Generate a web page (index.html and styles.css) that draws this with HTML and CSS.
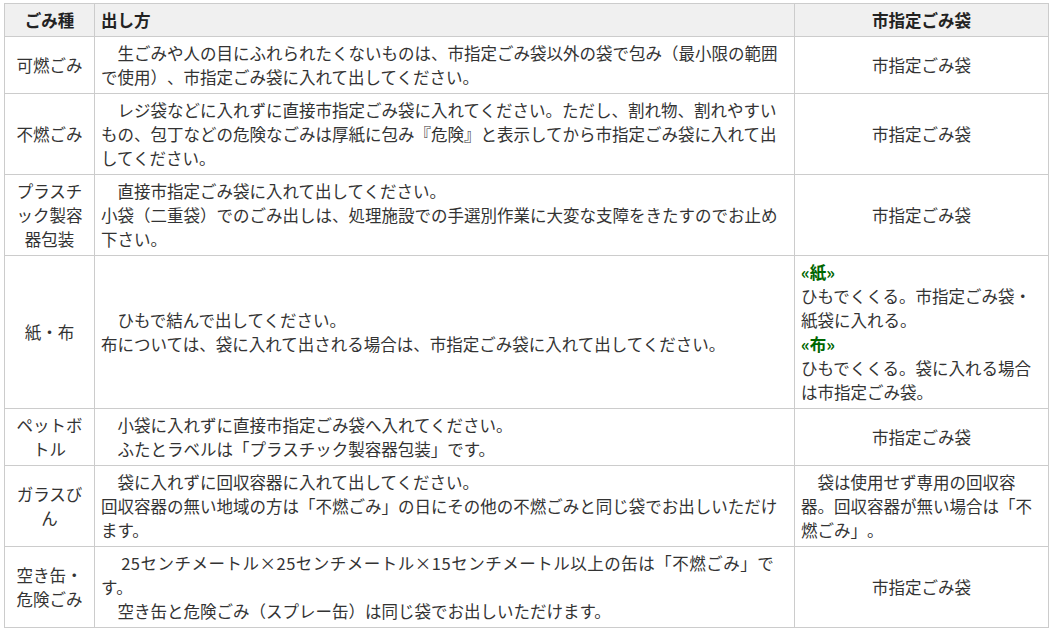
FILE: index.html
```html
<!DOCTYPE html>
<html lang="ja">
<head>
<meta charset="utf-8">
<title>ごみの出し方</title>
<link rel="stylesheet" href="styles.css">
</head>
<body>
<table class="gomi">
  <colgroup>
    <col class="c1">
    <col class="c2">
    <col class="c3">
  </colgroup>
  <thead>
    <tr>
      <th class="center">ごみ種</th>
      <th class="left">出し方</th>
      <th class="center">市指定ごみ袋</th>
    </tr>
  </thead>
  <tbody>
    <tr>
      <td class="center">可燃ごみ</td>
      <td>　生ごみや人の目にふれられたくないものは、市指定ごみ袋以外の袋で包み（最小限の範囲で使用）、市指定ごみ袋に入れて出してください。</td>
      <td class="center">市指定ごみ袋</td>
    </tr>
    <tr>
      <td class="center">不燃ごみ</td>
      <td>　レジ袋などに入れずに直接市指定ごみ袋に入れてください。ただし、割れ物、割れやすいもの、包丁などの危険なごみは厚紙に包み『危険』と表示してから市指定ごみ袋に入れて出してください。</td>
      <td class="center">市指定ごみ袋</td>
    </tr>
    <tr>
      <td class="center">プラスチック製容器包装</td>
      <td>　直接市指定ごみ袋に入れて出してください。<br>小袋（二重袋）でのごみ出しは、処理施設での手選別作業に大変な支障をきたすのでお止め下さい。</td>
      <td class="center">市指定ごみ袋</td>
    </tr>
    <tr>
      <td class="center">紙・布</td>
      <td>　ひもで結んで出してください。<br>布については、袋に入れて出される場合は、市指定ごみ袋に入れて出してください。</td>
      <td><strong class="green">«紙»</strong><br>ひもでくくる。市指定ごみ袋・紙袋に入れる。<br><strong class="green">«布»</strong><br>ひもでくくる。袋に入れる場合は市指定ごみ袋。</td>
    </tr>
    <tr>
      <td class="center">ペットボトル</td>
      <td>　小袋に入れずに直接市指定ごみ袋へ入れてください。<br>　ふたとラベルは「プラスチック製容器包装」です。</td>
      <td class="center">市指定ごみ袋</td>
    </tr>
    <tr>
      <td class="center">ガラスびん</td>
      <td>　袋に入れずに回収容器に入れて出してください。<br>回収容器の無い地域の方は「不燃ごみ」の日にその他の不燃ごみと同じ袋でお出しいただけます。</td>
      <td>　袋は使用せず専用の回収容器。回収容器が無い場合は「不燃ごみ」。</td>
    </tr>
    <tr>
      <td class="center">空き缶・危険ごみ</td>
      <td>　 <span class="wide">25センチメートル×25センチメートル×15センチメートル以上の缶は「不燃ごみ」です。</span><br>　空き缶と危険ごみ（スプレー缶）は同じ袋でお出しいただけます。</td>
      <td class="center">市指定ごみ袋</td>
    </tr>
  </tbody>
</table>
</body>
</html>
```
FILE: styles.css
```css
html, body {
  margin: 0;
  padding: 0;
  background: #ffffff;
}

body {
  padding: 3px 0 0 4px;
  font-family: "Noto Sans CJK JP", "Noto Sans", sans-serif;
  font-size: 16.5px;
  line-height: 24px;
  color: #333333;
}

.gomi {
  border-collapse: collapse;
  table-layout: fixed;
  width: 1044px;
}

.c1 { width: 90px; }
.c2 { width: 700px; }
.c3 { width: 254px; }

.gomi th,
.gomi td {
  border: 1px solid #cccccc;
  padding: 4px 6px;
  vertical-align: middle;
  text-align: left;
  word-break: normal;
  line-break: loose;
  text-spacing-trim: space-all;
}

.gomi th {
  background: #f0f0f0;
  font-weight: bold;
  color: #222222;
}

.gomi .center { text-align: center; }
.gomi .left { text-align: left; }

.wide {
  letter-spacing: 0.5px;
}

.green {
  color: #006600;
  font-weight: bold;
}
```
